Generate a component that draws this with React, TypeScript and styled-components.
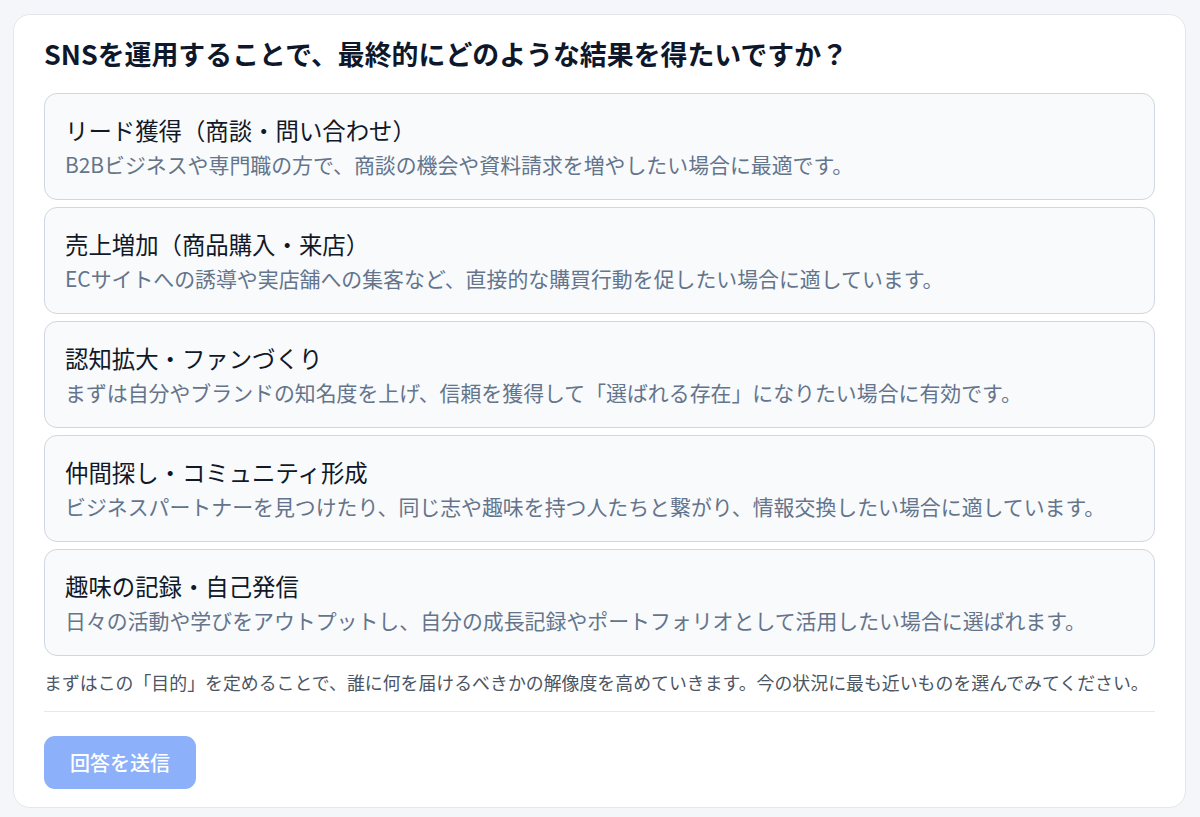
import React from "react";
import styled, { createGlobalStyle } from "styled-components";

const GlobalStyle = createGlobalStyle`
  html, body { margin: 0; padding: 0; background: #f4f6f9; }
  body {
    font-family: "Noto Sans CJK JP", "Noto Sans", sans-serif;
    -webkit-font-smoothing: antialiased;
  }
  * { box-sizing: border-box; }
`;

const Page = styled.div`
  padding: 14px 14px 9px 13px;
`;

const Card = styled.section`
  background: #ffffff;
  border: 1px solid #e3e7ed;
  border-radius: 17px;
  padding: 21px 30px 18px 30px;
  display: flex;
  flex-direction: column;
`;

const Title = styled.h2`
  margin: 0 0 21px 0;
  font-size: 26.9px;
  line-height: 36px;
  font-weight: 700;
  color: #0f172a;
`;

const OptionList = styled.div`
  display: flex;
  flex-direction: column;
  gap: 7px;
`;

const Option = styled.button`
  display: flex;
  flex-direction: column;
  align-items: flex-start;
  text-align: left;
  width: 100%;
  background: #f8fafc;
  border: 1px solid #cfd7e2;
  border-radius: 13px;
  padding: 19px 20px 20px 20px;
  font-family: inherit;
  cursor: pointer;
`;

const OptionTitle = styled.span`
  font-size: 23.4px;
  line-height: 34px;
  color: #111827;
  font-weight: 400;
`;

const OptionDesc = styled.span`
  margin-top: 2px;
  font-size: 20.9px;
  line-height: 30px;
  color: #64748b;
`;

const Note = styled.p`
  margin: 13px 0 16px 0;
  font-size: 17.9px;
  line-height: 26px;
  color: #4b5563;
`;

const Divider = styled.hr`
  margin: 0 0 24px 0;
  border: none;
  border-top: 1px solid #e5e9ef;
`;

const Submit = styled.button`
  align-self: flex-start;
  height: 53px;
  padding: 0 26px;
  border: none;
  border-radius: 11px;
  background: #8db0fb;
  color: #ffffff;
  font-family: inherit;
  font-size: 20px;
  font-weight: 500;
  cursor: not-allowed;
`;

const options = [
  {
    title: "リード獲得（商談・問い合わせ）",
    desc: "B2Bビジネスや専門職の方で、商談の機会や資料請求を増やしたい場合に最適です。",
  },
  {
    title: "売上増加（商品購入・来店）",
    desc: "ECサイトへの誘導や実店舗への集客など、直接的な購買行動を促したい場合に適しています。",
  },
  {
    title: "認知拡大・ファンづくり",
    desc: "まずは自分やブランドの知名度を上げ、信頼を獲得して「選ばれる存在」になりたい場合に有効です。",
  },
  {
    title: "仲間探し・コミュニティ形成",
    desc: "ビジネスパートナーを見つけたり、同じ志や趣味を持つ人たちと繋がり、情報交換したい場合に適しています。",
  },
  {
    title: "趣味の記録・自己発信",
    desc: "日々の活動や学びをアウトプットし、自分の成長記録やポートフォリオとして活用したい場合に選ばれます。",
  },
];

export default function App() {
  return (
    <>
      <GlobalStyle />
      <Page>
        <Card>
          <Title>SNSを運用することで、最終的にどのような結果を得たいですか？</Title>
          <OptionList>
            {options.map((o) => (
              <Option key={o.title} type="button">
                <OptionTitle>{o.title}</OptionTitle>
                <OptionDesc>{o.desc}</OptionDesc>
              </Option>
            ))}
          </OptionList>
          <Note>
            まずはこの「目的」を定めることで、誰に何を届けるべきかの解像度を高めていきます。今の状況に最も近いものを選んでみてください。
          </Note>
          <Divider />
          <Submit type="button" disabled>
            回答を送信
          </Submit>
        </Card>
      </Page>
    </>
  );
}
